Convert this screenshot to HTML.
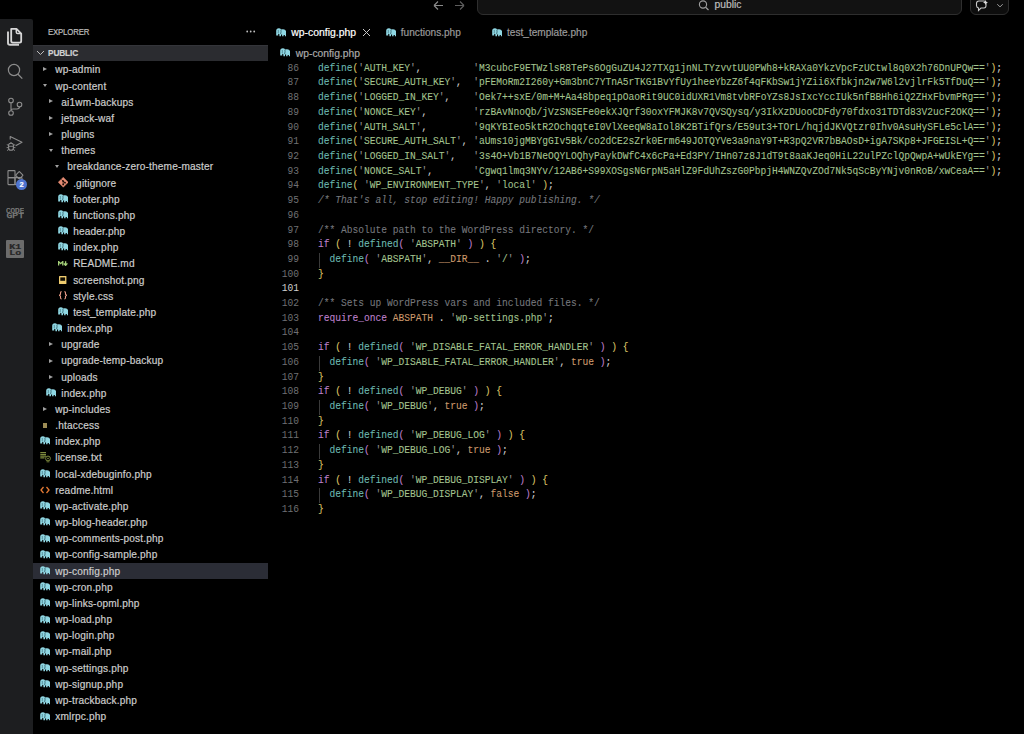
<!DOCTYPE html>
<html><head><meta charset="utf-8"><title>wp-config.php</title><style>
*{margin:0;padding:0;box-sizing:border-box}
html,body{width:1024px;height:734px;overflow:hidden;background:#000}
body{position:relative;font-family:"Liberation Sans",sans-serif;color:#ccc;-webkit-text-stroke:0.2px currentColor}
.st{-webkit-text-stroke:0.25px currentColor}
.a{position:absolute}
.row{position:absolute;left:33px;width:234.5px;height:16.19px;white-space:nowrap;font-size:10.1px;color:#cccccc}
.row span.t{position:absolute;top:0;line-height:16.19px}
.tw{position:absolute;width:0;height:0}
.tw.r{border-left:4px solid #a0a0a0;border-top:2.8px solid transparent;border-bottom:2.8px solid transparent}
.tw.d{border-top:3.8px solid #a0a0a0;border-left:2.8px solid transparent;border-right:2.8px solid transparent}
.ic{position:absolute}
.code{-webkit-text-stroke:0.08px currentColor;position:absolute;left:318.0px;transform-origin:0 9.1px;transform:scaleY(1.17);font-family:"Liberation Mono",monospace;font-size:9.591666666666667px;white-space:pre;line-height:14.71px;height:14.71px}
.ln{-webkit-text-stroke:0;position:absolute;left:269.5px;transform-origin:0 9.1px;transform:scaleY(1.17);width:29.5px;text-align:right;font-family:"Liberation Mono",monospace;font-size:9.591666666666667px;line-height:14.71px;color:#6f7073}
.f{color:#6cb8b0} .s{color:#a3c38f} .q{color:#8f8f8f} .p{color:#cfcfcf} .b1{color:#dcc466} .b2{color:#bf7ecb} .k{color:#bf82cc} .c{color:#cc9a6c} .cm{color:#75777c;font-style:italic} .dc{color:#75777c}
</style></head>
<body>
<div class="a" style="left:0;top:0;width:1024px;height:19.5px;background:#000"></div><svg class="a" style="left:432px;top:0px" width="40" height="12" viewBox="0 0 40 12">
<path d="M2 5.5 H11 M2 5.5 L6 1.5 M2 5.5 L6 9.5" stroke="#8a8a8a" stroke-width="1.1" fill="none"/>
<path d="M23 5.5 H32 M32 5.5 L28 1.5 M32 5.5 L28 9.5" stroke="#5e5e5e" stroke-width="1.1" fill="none"/>
</svg><div class="a" style="left:477px;top:-10px;width:485px;height:24.5px;background:#121212;border:1px solid #2e2e2e;border-radius:6px"></div><svg class="a" style="left:698px;top:0px" width="12" height="11" viewBox="0 0 12 11"><circle cx="5" cy="4.5" r="3.6" stroke="#a0a0a0" stroke-width="1.1" fill="none"/><path d="M7.6 7.2 L10.5 10" stroke="#a0a0a0" stroke-width="1.2"/></svg><div class="a" style="left:714.5px;top:-0.6px;font-size:10.3px;line-height:12px;color:#bdbdbd">public</div><div class="a" style="left:970px;top:-10px;width:39px;height:24.5px;background:#0d0d0d;border:1px solid #2e2e2e;border-radius:6px"></div><svg class="a" style="left:975px;top:0px" width="32" height="12" viewBox="0 0 32 12">
<path d="M4 1 H9 Q11 1 11 3.5 V5.5 Q11 8 9 8 H6 L3.5 10.5 V8 Q1.5 7.5 1.5 5.5 V3.5 Q1.5 1 4 1 Z" stroke="#c8c8c8" stroke-width="1.1" fill="none"/>
<path d="M10.5 0 L11.3 1.7 L13 2.5 L11.3 3.3 L10.5 5 L9.7 3.3 L8 2.5 L9.7 1.7 Z" fill="#d8d8d8"/>
<path d="M22.3 4.2 L25 6.9 L27.7 4.2" stroke="#a0a0a0" stroke-width="1" fill="none"/>
</svg><div class="a" style="left:0;top:18.8px;width:33px;height:716px;background:#1d1e20;border-top-right-radius:2px"></div><svg class="a" style="left:6px;top:27px" width="17" height="20" viewBox="0 0 17 20">
<path d="M2 4.4 V16 Q2 17.8 4 17.8 H13" stroke="#d0d0d0" stroke-width="1.9" fill="none"/>
<path d="M5.2 1.9 H10.5 L15.2 6.6 V14 Q15.2 15.6 13.6 15.6 H6.8 Q5.2 15.6 5.2 14 Z" stroke="#d8d8d8" stroke-width="1.8" fill="none" stroke-linejoin="round"/>
<path d="M10.3 1.9 V5.2 Q10.3 6.6 11.7 6.6 H15.2" stroke="#d8d8d8" stroke-width="1.5" fill="none"/>
</svg><svg class="a" style="left:6px;top:62px" width="18" height="19" viewBox="0 0 18 19">
<circle cx="8" cy="8" r="5.6" stroke="#8c8c8c" stroke-width="1.2" fill="none"/>
<path d="M12 12.2 L16.3 16.6" stroke="#8c8c8c" stroke-width="1.3"/>
</svg><svg class="a" style="left:7px;top:97px" width="16" height="20" viewBox="0 0 16 20">
<circle cx="4" cy="3.5" r="2.3" stroke="#8c8c8c" stroke-width="1.1" fill="none"/>
<circle cx="4" cy="16" r="2.3" stroke="#8c8c8c" stroke-width="1.1" fill="none"/>
<circle cx="12.5" cy="7.5" r="2.3" stroke="#8c8c8c" stroke-width="1.1" fill="none"/>
<path d="M4 5.8 V13.7 M12.5 9.8 Q12.5 12 10 12 H6 Q4 12 4 13.7" stroke="#8c8c8c" stroke-width="1.1" fill="none"/>
</svg><svg class="a" style="left:0px;top:125px" width="33" height="30" viewBox="0 0 33 30">
<path d="M10.2 14.5 V11.5 L22 17.2 L15.6 20.8" stroke="#8c8c8c" stroke-width="1.1" fill="none" stroke-linejoin="round"/>
<path d="M8.6 20.2 Q8.6 18.2 11 18.2 Q13.4 18.2 13.4 20.2 V23 Q13.4 25.3 11 25.3 Q8.6 25.3 8.6 23 Z" stroke="#8c8c8c" stroke-width="1.1" fill="none"/>
<path d="M9.6 18.6 Q11 16.6 12.4 18.6 M8.6 21.3 H13.4 M6.8 19.6 L8.6 20.4 M15.2 19.6 L13.4 20.4 M6.6 22.6 H8.6 M13.4 22.6 H15.4 M7 25.6 L8.9 24.3 M15 25.6 L13.1 24.3" stroke="#8c8c8c" stroke-width="0.9" fill="none"/>
</svg><svg class="a" style="left:0px;top:165px" width="33" height="24" viewBox="0 0 33 24">
<rect x="8" y="5.6" width="7" height="7" stroke="#8c8c8c" stroke-width="1.1" fill="none" rx="0.6"/>
<rect x="8" y="12.6" width="7" height="7" stroke="#8c8c8c" stroke-width="1.1" fill="none" rx="0.6"/>
<rect x="15" y="12.6" width="7" height="7" stroke="#8c8c8c" stroke-width="1.1" fill="none" rx="0.6"/>
<rect x="16.6" y="7.6" width="5.4" height="5.4" stroke="#8c8c8c" stroke-width="1.1" fill="none" rx="0.6" transform="rotate(45 19.3 10.3)"/>
</svg><div class="a" style="left:16px;top:178.7px;width:11px;height:11px;border-radius:50%;background:#4f74cf;color:#fff;font-size:7.5px;font-weight:bold;line-height:11px;text-align:center">2</div><svg class="a" style="left:5.8px;top:208.3px" width="18.5" height="11" viewBox="0 0 18.5 11">
<text x="0" y="4.7" textLength="18.2" lengthAdjust="spacingAndGlyphs" font-family="Liberation Mono" font-size="6.4" fill="#7e7e7e" stroke="#7e7e7e" stroke-width="0.25">CODE</text>
<text x="0.5" y="10.3" textLength="17.5" lengthAdjust="spacingAndGlyphs" font-family="Liberation Mono" font-size="6.4" fill="#7e7e7e" stroke="#7e7e7e" stroke-width="0.25">GPT</text>
</svg><div class="a" style="left:6px;top:240px;width:18.4px;height:18.4px;background:#6c6c6c;border-radius:1px"></div><svg class="a" style="left:6px;top:240px" width="18.4" height="18.4" viewBox="0 0 18.4 18.4">
<text x="3.3" y="8.6" textLength="12" lengthAdjust="spacingAndGlyphs" font-family="Liberation Mono" font-weight="bold" font-size="7.6" fill="#262626" stroke="#262626" stroke-width="0.2">K1</text>
<text x="3.3" y="15.4" textLength="12" lengthAdjust="spacingAndGlyphs" font-family="Liberation Mono" font-weight="bold" font-size="7.6" fill="#262626" stroke="#262626" stroke-width="0.2">Lo</text>
</svg><div class="a" style="left:48px;top:26.6px;font-size:8.6px;line-height:10px;color:#bdbdbd;letter-spacing:-0.2px;transform:scaleX(0.91);transform-origin:0 0">EXPLORER</div><svg class="a" style="left:246px;top:30px" width="10" height="3" viewBox="0 0 10 3"><circle cx="1.2" cy="1.5" r="0.9" fill="#c0c0c0"/><circle cx="4.7" cy="1.5" r="0.9" fill="#c0c0c0"/><circle cx="8.2" cy="1.5" r="0.9" fill="#c0c0c0"/></svg><div class="a" style="left:33px;top:45.0px;width:234.5px;height:16.19px;background:#2b2c30;border-top:1px solid #34353a"></div><svg class="a" style="left:36px;top:50.0px" width="9" height="6" viewBox="0 0 9 6"><path d="M1 1 L4.5 4.5 L8 1" stroke="#bdbdbd" stroke-width="1" fill="none"/></svg><div class="a" style="left:48px;top:45.0px;font-size:8.3px;line-height:16.19px;color:#d0d0d0;font-weight:bold;letter-spacing:-0.15px">PUBLIC</div><div class="a" style="left:55.30px;top:62.37px;font-size:10.1px;line-height:16.19px;white-space:nowrap;color:#cccccc;letter-spacing:0.17px">wp-admin</div><div class="a tw r" style="left:43.40px;top:67.09px"></div><div class="a" style="left:55.30px;top:78.54px;font-size:10.1px;line-height:16.19px;white-space:nowrap;color:#cccccc;letter-spacing:0.17px">wp-content</div><div class="a tw d" style="left:43.10px;top:83.78px"></div><div class="a" style="left:61.25px;top:94.71px;font-size:10.1px;line-height:16.19px;white-space:nowrap;color:#cccccc;letter-spacing:0.17px">ai1wm-backups</div><div class="a tw r" style="left:49.35px;top:99.47px"></div><div class="a" style="left:61.25px;top:110.88px;font-size:10.1px;line-height:16.19px;white-space:nowrap;color:#cccccc;letter-spacing:0.17px">jetpack-waf</div><div class="a tw r" style="left:49.35px;top:115.66px"></div><div class="a" style="left:61.25px;top:127.05px;font-size:10.1px;line-height:16.19px;white-space:nowrap;color:#cccccc;letter-spacing:0.17px">plugins</div><div class="a tw r" style="left:49.35px;top:131.85px"></div><div class="a" style="left:61.25px;top:143.22px;font-size:10.1px;line-height:16.19px;white-space:nowrap;color:#cccccc;letter-spacing:0.17px">themes</div><div class="a tw d" style="left:49.05px;top:148.54px"></div><div class="a" style="left:67.20px;top:159.39px;font-size:10.1px;line-height:16.19px;white-space:nowrap;color:#cccccc;letter-spacing:0.17px">breakdance-zero-theme-master</div><div class="a tw d" style="left:55.00px;top:164.73px"></div><div class="a" style="left:73.15px;top:175.56px;font-size:10.1px;line-height:16.19px;white-space:nowrap;color:#cccccc;letter-spacing:0.17px">.gitignore</div><svg class="ic" style="left:57.75px;top:177.12px" width="10.5" height="10.5" viewBox="0 0 10.5 10.5"><path d="M5.25 0.2 L10.3 5.25 L5.25 10.3 L0.2 5.25 Z" fill="#e48a72" stroke="#e48a72" stroke-width="0.4" stroke-linejoin="round"/><path d="M3.6 2.6 L5.2 4.2 M5.2 4.2 V7.6 M5.2 4.2 L6.9 5.6" stroke="#1a0a05" stroke-width="0.8"/><circle cx="5.2" cy="4.2" r="0.9" fill="#1a0a05"/><circle cx="5.2" cy="7.4" r="0.9" fill="#1a0a05"/><circle cx="7" cy="5.7" r="0.9" fill="#1a0a05"/></svg><div class="a" style="left:73.15px;top:191.73px;font-size:10.1px;line-height:16.19px;white-space:nowrap;color:#cccccc;letter-spacing:0.17px">footer.php</div><svg class="ic" style="left:57.75px;top:193.61px" width="10.5" height="9" viewBox="0 0 10.5 9"><path d="M0.2 2.8 Q0.2 0.2 2.8 0.2 Q4.6 0.2 5 1.4 Q5.6 1.1 7.2 1.2 Q10.3 1.5 10.3 4.8 V8.2 H8.9 V6.9 H7.6 V8.2 H6.1 V6.6 H5 V8.2 H3.4 V6.2 Q2.4 6 2.2 5.2 V7.6 H0.2 Z" fill="#8fd6e2"/><path d="M4.9 2 Q5.4 3.5 4.6 6" stroke="#1f4650" stroke-width="0.7" fill="none"/><path d="M2.2 2 Q2.5 3.4 2.2 5" stroke="#1f4650" stroke-width="0.5" fill="none"/></svg><div class="a" style="left:73.15px;top:207.90px;font-size:10.1px;line-height:16.19px;white-space:nowrap;color:#cccccc;letter-spacing:0.17px">functions.php</div><svg class="ic" style="left:57.75px;top:209.80px" width="10.5" height="9" viewBox="0 0 10.5 9"><path d="M0.2 2.8 Q0.2 0.2 2.8 0.2 Q4.6 0.2 5 1.4 Q5.6 1.1 7.2 1.2 Q10.3 1.5 10.3 4.8 V8.2 H8.9 V6.9 H7.6 V8.2 H6.1 V6.6 H5 V8.2 H3.4 V6.2 Q2.4 6 2.2 5.2 V7.6 H0.2 Z" fill="#8fd6e2"/><path d="M4.9 2 Q5.4 3.5 4.6 6" stroke="#1f4650" stroke-width="0.7" fill="none"/><path d="M2.2 2 Q2.5 3.4 2.2 5" stroke="#1f4650" stroke-width="0.5" fill="none"/></svg><div class="a" style="left:73.15px;top:224.07px;font-size:10.1px;line-height:16.19px;white-space:nowrap;color:#cccccc;letter-spacing:0.17px">header.php</div><svg class="ic" style="left:57.75px;top:225.99px" width="10.5" height="9" viewBox="0 0 10.5 9"><path d="M0.2 2.8 Q0.2 0.2 2.8 0.2 Q4.6 0.2 5 1.4 Q5.6 1.1 7.2 1.2 Q10.3 1.5 10.3 4.8 V8.2 H8.9 V6.9 H7.6 V8.2 H6.1 V6.6 H5 V8.2 H3.4 V6.2 Q2.4 6 2.2 5.2 V7.6 H0.2 Z" fill="#8fd6e2"/><path d="M4.9 2 Q5.4 3.5 4.6 6" stroke="#1f4650" stroke-width="0.7" fill="none"/><path d="M2.2 2 Q2.5 3.4 2.2 5" stroke="#1f4650" stroke-width="0.5" fill="none"/></svg><div class="a" style="left:73.15px;top:240.24px;font-size:10.1px;line-height:16.19px;white-space:nowrap;color:#cccccc;letter-spacing:0.17px">index.php</div><svg class="ic" style="left:57.75px;top:242.18px" width="10.5" height="9" viewBox="0 0 10.5 9"><path d="M0.2 2.8 Q0.2 0.2 2.8 0.2 Q4.6 0.2 5 1.4 Q5.6 1.1 7.2 1.2 Q10.3 1.5 10.3 4.8 V8.2 H8.9 V6.9 H7.6 V8.2 H6.1 V6.6 H5 V8.2 H3.4 V6.2 Q2.4 6 2.2 5.2 V7.6 H0.2 Z" fill="#8fd6e2"/><path d="M4.9 2 Q5.4 3.5 4.6 6" stroke="#1f4650" stroke-width="0.7" fill="none"/><path d="M2.2 2 Q2.5 3.4 2.2 5" stroke="#1f4650" stroke-width="0.5" fill="none"/></svg><div class="a" style="left:73.15px;top:256.41px;font-size:10.1px;line-height:16.19px;white-space:nowrap;color:#cccccc;letter-spacing:0.17px">README.md</div><svg class="ic" style="left:58.15px;top:261.07px" width="10" height="5" viewBox="0 0 10 5"><path d="M0.6 4.6 V0.6 L2.7 2.6 L4.8 0.6 V4.6" stroke="#a6d27a" stroke-width="1.3" fill="none"/><path d="M7.6 0.2 V4 M5.8 2.4 L7.6 4.4 L9.4 2.4" stroke="#a6d27a" stroke-width="1.3" fill="none"/></svg><div class="a" style="left:73.15px;top:272.58px;font-size:10.1px;line-height:16.19px;white-space:nowrap;color:#cccccc;letter-spacing:0.17px">screenshot.png</div><svg class="ic" style="left:59.05px;top:276.06px" width="8" height="8" viewBox="0 0 8 8"><rect x="0" y="0" width="7.4" height="8" fill="#eecb6e" rx="0.6"/><rect x="1.3" y="1.4" width="4.8" height="3.4" fill="#120e04"/></svg><div class="a" style="left:73.15px;top:288.75px;font-size:10.1px;line-height:16.19px;white-space:nowrap;color:#cccccc;letter-spacing:0.17px">style.css</div><svg class="ic" style="left:58.75px;top:291.15px" width="8" height="8.5" viewBox="0 0 8 8.5"><path d="M2.6 0.6 Q1.5 0.6 1.5 1.7 V3.3 L0.4 4.25 L1.5 5.2 V6.8 Q1.5 7.9 2.6 7.9 M5.4 0.6 Q6.5 0.6 6.5 1.7 V3.3 L7.6 4.25 L6.5 5.2 V6.8 Q6.5 7.9 5.4 7.9" stroke="#e89a86" stroke-width="1.1" fill="none" stroke-linejoin="miter"/></svg><div class="a" style="left:73.15px;top:304.92px;font-size:10.1px;line-height:16.19px;white-space:nowrap;color:#cccccc;letter-spacing:0.17px">test_template.php</div><svg class="ic" style="left:57.75px;top:306.94px" width="10.5" height="9" viewBox="0 0 10.5 9"><path d="M0.2 2.8 Q0.2 0.2 2.8 0.2 Q4.6 0.2 5 1.4 Q5.6 1.1 7.2 1.2 Q10.3 1.5 10.3 4.8 V8.2 H8.9 V6.9 H7.6 V8.2 H6.1 V6.6 H5 V8.2 H3.4 V6.2 Q2.4 6 2.2 5.2 V7.6 H0.2 Z" fill="#8fd6e2"/><path d="M4.9 2 Q5.4 3.5 4.6 6" stroke="#1f4650" stroke-width="0.7" fill="none"/><path d="M2.2 2 Q2.5 3.4 2.2 5" stroke="#1f4650" stroke-width="0.5" fill="none"/></svg><div class="a" style="left:67.20px;top:321.09px;font-size:10.1px;line-height:16.19px;white-space:nowrap;color:#cccccc;letter-spacing:0.17px">index.php</div><svg class="ic" style="left:51.80px;top:323.13px" width="10.5" height="9" viewBox="0 0 10.5 9"><path d="M0.2 2.8 Q0.2 0.2 2.8 0.2 Q4.6 0.2 5 1.4 Q5.6 1.1 7.2 1.2 Q10.3 1.5 10.3 4.8 V8.2 H8.9 V6.9 H7.6 V8.2 H6.1 V6.6 H5 V8.2 H3.4 V6.2 Q2.4 6 2.2 5.2 V7.6 H0.2 Z" fill="#8fd6e2"/><path d="M4.9 2 Q5.4 3.5 4.6 6" stroke="#1f4650" stroke-width="0.7" fill="none"/><path d="M2.2 2 Q2.5 3.4 2.2 5" stroke="#1f4650" stroke-width="0.5" fill="none"/></svg><div class="a" style="left:61.25px;top:337.26px;font-size:10.1px;line-height:16.19px;white-space:nowrap;color:#cccccc;letter-spacing:0.17px">upgrade</div><div class="a tw r" style="left:49.35px;top:342.32px"></div><div class="a" style="left:61.25px;top:353.43px;font-size:10.1px;line-height:16.19px;white-space:nowrap;color:#cccccc;letter-spacing:0.17px">upgrade-temp-backup</div><div class="a tw r" style="left:49.35px;top:358.51px"></div><div class="a" style="left:61.25px;top:369.60px;font-size:10.1px;line-height:16.19px;white-space:nowrap;color:#cccccc;letter-spacing:0.17px">uploads</div><div class="a tw r" style="left:49.35px;top:374.70px"></div><div class="a" style="left:61.25px;top:385.77px;font-size:10.1px;line-height:16.19px;white-space:nowrap;color:#cccccc;letter-spacing:0.17px">index.php</div><svg class="ic" style="left:45.85px;top:387.89px" width="10.5" height="9" viewBox="0 0 10.5 9"><path d="M0.2 2.8 Q0.2 0.2 2.8 0.2 Q4.6 0.2 5 1.4 Q5.6 1.1 7.2 1.2 Q10.3 1.5 10.3 4.8 V8.2 H8.9 V6.9 H7.6 V8.2 H6.1 V6.6 H5 V8.2 H3.4 V6.2 Q2.4 6 2.2 5.2 V7.6 H0.2 Z" fill="#8fd6e2"/><path d="M4.9 2 Q5.4 3.5 4.6 6" stroke="#1f4650" stroke-width="0.7" fill="none"/><path d="M2.2 2 Q2.5 3.4 2.2 5" stroke="#1f4650" stroke-width="0.5" fill="none"/></svg><div class="a" style="left:55.30px;top:401.94px;font-size:10.1px;line-height:16.19px;white-space:nowrap;color:#cccccc;letter-spacing:0.17px">wp-includes</div><div class="a tw r" style="left:43.40px;top:407.08px"></div><div class="a" style="left:55.30px;top:418.11px;font-size:10.1px;line-height:16.19px;white-space:nowrap;color:#cccccc;letter-spacing:0.17px">.htaccess</div><div class="a" style="left:42.80px;top:422.77px;width:4px;height:5px;background:#9d8c55"></div><div class="a" style="left:55.30px;top:434.28px;font-size:10.1px;line-height:16.19px;white-space:nowrap;color:#cccccc;letter-spacing:0.17px">index.php</div><svg class="ic" style="left:39.90px;top:436.46px" width="10.5" height="9" viewBox="0 0 10.5 9"><path d="M0.2 2.8 Q0.2 0.2 2.8 0.2 Q4.6 0.2 5 1.4 Q5.6 1.1 7.2 1.2 Q10.3 1.5 10.3 4.8 V8.2 H8.9 V6.9 H7.6 V8.2 H6.1 V6.6 H5 V8.2 H3.4 V6.2 Q2.4 6 2.2 5.2 V7.6 H0.2 Z" fill="#8fd6e2"/><path d="M4.9 2 Q5.4 3.5 4.6 6" stroke="#1f4650" stroke-width="0.7" fill="none"/><path d="M2.2 2 Q2.5 3.4 2.2 5" stroke="#1f4650" stroke-width="0.5" fill="none"/></svg><div class="a" style="left:55.30px;top:450.45px;font-size:10.1px;line-height:16.19px;white-space:nowrap;color:#cccccc;letter-spacing:0.17px">license.txt</div><svg class="ic" style="left:39.90px;top:451.15px" width="11" height="12" viewBox="0 0 11 12"><path d="M0.3 1.5 H6 M0.3 3.3 H6 M0.3 5.1 H6 M0.3 6.9 H4.5" stroke="#7d8a3e" stroke-width="1.2"/><circle cx="8" cy="7.5" r="2.4" stroke="#7d8a3e" stroke-width="1" fill="none"/><circle cx="8" cy="7.5" r="0.8" fill="#7d8a3e"/><path d="M7.2 9.8 V11.5 M8.8 9.8 V11.5" stroke="#7d8a3e" stroke-width="0.8"/></svg><div class="a" style="left:55.30px;top:466.62px;font-size:10.1px;line-height:16.19px;white-space:nowrap;color:#cccccc;letter-spacing:0.17px">local-xdebuginfo.php</div><svg class="ic" style="left:39.90px;top:468.84px" width="10.5" height="9" viewBox="0 0 10.5 9"><path d="M0.2 2.8 Q0.2 0.2 2.8 0.2 Q4.6 0.2 5 1.4 Q5.6 1.1 7.2 1.2 Q10.3 1.5 10.3 4.8 V8.2 H8.9 V6.9 H7.6 V8.2 H6.1 V6.6 H5 V8.2 H3.4 V6.2 Q2.4 6 2.2 5.2 V7.6 H0.2 Z" fill="#8fd6e2"/><path d="M4.9 2 Q5.4 3.5 4.6 6" stroke="#1f4650" stroke-width="0.7" fill="none"/><path d="M2.2 2 Q2.5 3.4 2.2 5" stroke="#1f4650" stroke-width="0.5" fill="none"/></svg><div class="a" style="left:55.30px;top:482.79px;font-size:10.1px;line-height:16.19px;white-space:nowrap;color:#cccccc;letter-spacing:0.17px">readme.html</div><svg class="ic" style="left:40.40px;top:485.53px" width="10" height="8" viewBox="0 0 10 8"><path d="M3.5 1 L1 4 L3.5 7 M6.5 1 L9 4 L6.5 7" stroke="#e37933" stroke-width="1.3" fill="none"/></svg><div class="a" style="left:55.30px;top:498.96px;font-size:10.1px;line-height:16.19px;white-space:nowrap;color:#cccccc;letter-spacing:0.17px">wp-activate.php</div><svg class="ic" style="left:39.90px;top:501.22px" width="10.5" height="9" viewBox="0 0 10.5 9"><path d="M0.2 2.8 Q0.2 0.2 2.8 0.2 Q4.6 0.2 5 1.4 Q5.6 1.1 7.2 1.2 Q10.3 1.5 10.3 4.8 V8.2 H8.9 V6.9 H7.6 V8.2 H6.1 V6.6 H5 V8.2 H3.4 V6.2 Q2.4 6 2.2 5.2 V7.6 H0.2 Z" fill="#8fd6e2"/><path d="M4.9 2 Q5.4 3.5 4.6 6" stroke="#1f4650" stroke-width="0.7" fill="none"/><path d="M2.2 2 Q2.5 3.4 2.2 5" stroke="#1f4650" stroke-width="0.5" fill="none"/></svg><div class="a" style="left:55.30px;top:515.13px;font-size:10.1px;line-height:16.19px;white-space:nowrap;color:#cccccc;letter-spacing:0.17px">wp-blog-header.php</div><svg class="ic" style="left:39.90px;top:517.41px" width="10.5" height="9" viewBox="0 0 10.5 9"><path d="M0.2 2.8 Q0.2 0.2 2.8 0.2 Q4.6 0.2 5 1.4 Q5.6 1.1 7.2 1.2 Q10.3 1.5 10.3 4.8 V8.2 H8.9 V6.9 H7.6 V8.2 H6.1 V6.6 H5 V8.2 H3.4 V6.2 Q2.4 6 2.2 5.2 V7.6 H0.2 Z" fill="#8fd6e2"/><path d="M4.9 2 Q5.4 3.5 4.6 6" stroke="#1f4650" stroke-width="0.7" fill="none"/><path d="M2.2 2 Q2.5 3.4 2.2 5" stroke="#1f4650" stroke-width="0.5" fill="none"/></svg><div class="a" style="left:55.30px;top:531.30px;font-size:10.1px;line-height:16.19px;white-space:nowrap;color:#cccccc;letter-spacing:0.17px">wp-comments-post.php</div><svg class="ic" style="left:39.90px;top:533.60px" width="10.5" height="9" viewBox="0 0 10.5 9"><path d="M0.2 2.8 Q0.2 0.2 2.8 0.2 Q4.6 0.2 5 1.4 Q5.6 1.1 7.2 1.2 Q10.3 1.5 10.3 4.8 V8.2 H8.9 V6.9 H7.6 V8.2 H6.1 V6.6 H5 V8.2 H3.4 V6.2 Q2.4 6 2.2 5.2 V7.6 H0.2 Z" fill="#8fd6e2"/><path d="M4.9 2 Q5.4 3.5 4.6 6" stroke="#1f4650" stroke-width="0.7" fill="none"/><path d="M2.2 2 Q2.5 3.4 2.2 5" stroke="#1f4650" stroke-width="0.5" fill="none"/></svg><div class="a" style="left:55.30px;top:547.47px;font-size:10.1px;line-height:16.19px;white-space:nowrap;color:#cccccc;letter-spacing:0.17px">wp-config-sample.php</div><svg class="ic" style="left:39.90px;top:549.79px" width="10.5" height="9" viewBox="0 0 10.5 9"><path d="M0.2 2.8 Q0.2 0.2 2.8 0.2 Q4.6 0.2 5 1.4 Q5.6 1.1 7.2 1.2 Q10.3 1.5 10.3 4.8 V8.2 H8.9 V6.9 H7.6 V8.2 H6.1 V6.6 H5 V8.2 H3.4 V6.2 Q2.4 6 2.2 5.2 V7.6 H0.2 Z" fill="#8fd6e2"/><path d="M4.9 2 Q5.4 3.5 4.6 6" stroke="#1f4650" stroke-width="0.7" fill="none"/><path d="M2.2 2 Q2.5 3.4 2.2 5" stroke="#1f4650" stroke-width="0.5" fill="none"/></svg><div class="a" style="left:33px;top:563.08px;width:234.5px;height:16.19px;background:#2b2d36"></div><div class="a" style="left:55.30px;top:563.64px;font-size:10.1px;line-height:16.19px;white-space:nowrap;color:#cccccc;letter-spacing:0.17px">wp-config.php</div><svg class="ic" style="left:39.90px;top:565.98px" width="10.5" height="9" viewBox="0 0 10.5 9"><path d="M0.2 2.8 Q0.2 0.2 2.8 0.2 Q4.6 0.2 5 1.4 Q5.6 1.1 7.2 1.2 Q10.3 1.5 10.3 4.8 V8.2 H8.9 V6.9 H7.6 V8.2 H6.1 V6.6 H5 V8.2 H3.4 V6.2 Q2.4 6 2.2 5.2 V7.6 H0.2 Z" fill="#8fd6e2"/><path d="M4.9 2 Q5.4 3.5 4.6 6" stroke="#1f4650" stroke-width="0.7" fill="none"/><path d="M2.2 2 Q2.5 3.4 2.2 5" stroke="#1f4650" stroke-width="0.5" fill="none"/></svg><div class="a" style="left:55.30px;top:579.81px;font-size:10.1px;line-height:16.19px;white-space:nowrap;color:#cccccc;letter-spacing:0.17px">wp-cron.php</div><svg class="ic" style="left:39.90px;top:582.17px" width="10.5" height="9" viewBox="0 0 10.5 9"><path d="M0.2 2.8 Q0.2 0.2 2.8 0.2 Q4.6 0.2 5 1.4 Q5.6 1.1 7.2 1.2 Q10.3 1.5 10.3 4.8 V8.2 H8.9 V6.9 H7.6 V8.2 H6.1 V6.6 H5 V8.2 H3.4 V6.2 Q2.4 6 2.2 5.2 V7.6 H0.2 Z" fill="#8fd6e2"/><path d="M4.9 2 Q5.4 3.5 4.6 6" stroke="#1f4650" stroke-width="0.7" fill="none"/><path d="M2.2 2 Q2.5 3.4 2.2 5" stroke="#1f4650" stroke-width="0.5" fill="none"/></svg><div class="a" style="left:55.30px;top:595.98px;font-size:10.1px;line-height:16.19px;white-space:nowrap;color:#cccccc;letter-spacing:0.17px">wp-links-opml.php</div><svg class="ic" style="left:39.90px;top:598.36px" width="10.5" height="9" viewBox="0 0 10.5 9"><path d="M0.2 2.8 Q0.2 0.2 2.8 0.2 Q4.6 0.2 5 1.4 Q5.6 1.1 7.2 1.2 Q10.3 1.5 10.3 4.8 V8.2 H8.9 V6.9 H7.6 V8.2 H6.1 V6.6 H5 V8.2 H3.4 V6.2 Q2.4 6 2.2 5.2 V7.6 H0.2 Z" fill="#8fd6e2"/><path d="M4.9 2 Q5.4 3.5 4.6 6" stroke="#1f4650" stroke-width="0.7" fill="none"/><path d="M2.2 2 Q2.5 3.4 2.2 5" stroke="#1f4650" stroke-width="0.5" fill="none"/></svg><div class="a" style="left:55.30px;top:612.15px;font-size:10.1px;line-height:16.19px;white-space:nowrap;color:#cccccc;letter-spacing:0.17px">wp-load.php</div><svg class="ic" style="left:39.90px;top:614.55px" width="10.5" height="9" viewBox="0 0 10.5 9"><path d="M0.2 2.8 Q0.2 0.2 2.8 0.2 Q4.6 0.2 5 1.4 Q5.6 1.1 7.2 1.2 Q10.3 1.5 10.3 4.8 V8.2 H8.9 V6.9 H7.6 V8.2 H6.1 V6.6 H5 V8.2 H3.4 V6.2 Q2.4 6 2.2 5.2 V7.6 H0.2 Z" fill="#8fd6e2"/><path d="M4.9 2 Q5.4 3.5 4.6 6" stroke="#1f4650" stroke-width="0.7" fill="none"/><path d="M2.2 2 Q2.5 3.4 2.2 5" stroke="#1f4650" stroke-width="0.5" fill="none"/></svg><div class="a" style="left:55.30px;top:628.32px;font-size:10.1px;line-height:16.19px;white-space:nowrap;color:#cccccc;letter-spacing:0.17px">wp-login.php</div><svg class="ic" style="left:39.90px;top:630.74px" width="10.5" height="9" viewBox="0 0 10.5 9"><path d="M0.2 2.8 Q0.2 0.2 2.8 0.2 Q4.6 0.2 5 1.4 Q5.6 1.1 7.2 1.2 Q10.3 1.5 10.3 4.8 V8.2 H8.9 V6.9 H7.6 V8.2 H6.1 V6.6 H5 V8.2 H3.4 V6.2 Q2.4 6 2.2 5.2 V7.6 H0.2 Z" fill="#8fd6e2"/><path d="M4.9 2 Q5.4 3.5 4.6 6" stroke="#1f4650" stroke-width="0.7" fill="none"/><path d="M2.2 2 Q2.5 3.4 2.2 5" stroke="#1f4650" stroke-width="0.5" fill="none"/></svg><div class="a" style="left:55.30px;top:644.49px;font-size:10.1px;line-height:16.19px;white-space:nowrap;color:#cccccc;letter-spacing:0.17px">wp-mail.php</div><svg class="ic" style="left:39.90px;top:646.93px" width="10.5" height="9" viewBox="0 0 10.5 9"><path d="M0.2 2.8 Q0.2 0.2 2.8 0.2 Q4.6 0.2 5 1.4 Q5.6 1.1 7.2 1.2 Q10.3 1.5 10.3 4.8 V8.2 H8.9 V6.9 H7.6 V8.2 H6.1 V6.6 H5 V8.2 H3.4 V6.2 Q2.4 6 2.2 5.2 V7.6 H0.2 Z" fill="#8fd6e2"/><path d="M4.9 2 Q5.4 3.5 4.6 6" stroke="#1f4650" stroke-width="0.7" fill="none"/><path d="M2.2 2 Q2.5 3.4 2.2 5" stroke="#1f4650" stroke-width="0.5" fill="none"/></svg><div class="a" style="left:55.30px;top:660.66px;font-size:10.1px;line-height:16.19px;white-space:nowrap;color:#cccccc;letter-spacing:0.17px">wp-settings.php</div><svg class="ic" style="left:39.90px;top:663.12px" width="10.5" height="9" viewBox="0 0 10.5 9"><path d="M0.2 2.8 Q0.2 0.2 2.8 0.2 Q4.6 0.2 5 1.4 Q5.6 1.1 7.2 1.2 Q10.3 1.5 10.3 4.8 V8.2 H8.9 V6.9 H7.6 V8.2 H6.1 V6.6 H5 V8.2 H3.4 V6.2 Q2.4 6 2.2 5.2 V7.6 H0.2 Z" fill="#8fd6e2"/><path d="M4.9 2 Q5.4 3.5 4.6 6" stroke="#1f4650" stroke-width="0.7" fill="none"/><path d="M2.2 2 Q2.5 3.4 2.2 5" stroke="#1f4650" stroke-width="0.5" fill="none"/></svg><div class="a" style="left:55.30px;top:676.83px;font-size:10.1px;line-height:16.19px;white-space:nowrap;color:#cccccc;letter-spacing:0.17px">wp-signup.php</div><svg class="ic" style="left:39.90px;top:679.31px" width="10.5" height="9" viewBox="0 0 10.5 9"><path d="M0.2 2.8 Q0.2 0.2 2.8 0.2 Q4.6 0.2 5 1.4 Q5.6 1.1 7.2 1.2 Q10.3 1.5 10.3 4.8 V8.2 H8.9 V6.9 H7.6 V8.2 H6.1 V6.6 H5 V8.2 H3.4 V6.2 Q2.4 6 2.2 5.2 V7.6 H0.2 Z" fill="#8fd6e2"/><path d="M4.9 2 Q5.4 3.5 4.6 6" stroke="#1f4650" stroke-width="0.7" fill="none"/><path d="M2.2 2 Q2.5 3.4 2.2 5" stroke="#1f4650" stroke-width="0.5" fill="none"/></svg><div class="a" style="left:55.30px;top:693.00px;font-size:10.1px;line-height:16.19px;white-space:nowrap;color:#cccccc;letter-spacing:0.17px">wp-trackback.php</div><svg class="ic" style="left:39.90px;top:695.50px" width="10.5" height="9" viewBox="0 0 10.5 9"><path d="M0.2 2.8 Q0.2 0.2 2.8 0.2 Q4.6 0.2 5 1.4 Q5.6 1.1 7.2 1.2 Q10.3 1.5 10.3 4.8 V8.2 H8.9 V6.9 H7.6 V8.2 H6.1 V6.6 H5 V8.2 H3.4 V6.2 Q2.4 6 2.2 5.2 V7.6 H0.2 Z" fill="#8fd6e2"/><path d="M4.9 2 Q5.4 3.5 4.6 6" stroke="#1f4650" stroke-width="0.7" fill="none"/><path d="M2.2 2 Q2.5 3.4 2.2 5" stroke="#1f4650" stroke-width="0.5" fill="none"/></svg><div class="a" style="left:55.30px;top:709.17px;font-size:10.1px;line-height:16.19px;white-space:nowrap;color:#cccccc;letter-spacing:0.17px">xmlrpc.php</div><svg class="ic" style="left:39.90px;top:711.69px" width="10.5" height="9" viewBox="0 0 10.5 9"><path d="M0.2 2.8 Q0.2 0.2 2.8 0.2 Q4.6 0.2 5 1.4 Q5.6 1.1 7.2 1.2 Q10.3 1.5 10.3 4.8 V8.2 H8.9 V6.9 H7.6 V8.2 H6.1 V6.6 H5 V8.2 H3.4 V6.2 Q2.4 6 2.2 5.2 V7.6 H0.2 Z" fill="#8fd6e2"/><path d="M4.9 2 Q5.4 3.5 4.6 6" stroke="#1f4650" stroke-width="0.7" fill="none"/><path d="M2.2 2 Q2.5 3.4 2.2 5" stroke="#1f4650" stroke-width="0.5" fill="none"/></svg><svg class="ic" style="left:275.8px;top:27.5px" width="10.5" height="9" viewBox="0 0 10.5 9"><path d="M0.2 2.8 Q0.2 0.2 2.8 0.2 Q4.6 0.2 5 1.4 Q5.6 1.1 7.2 1.2 Q10.3 1.5 10.3 4.8 V8.2 H8.9 V6.9 H7.6 V8.2 H6.1 V6.6 H5 V8.2 H3.4 V6.2 Q2.4 6 2.2 5.2 V7.6 H0.2 Z" fill="#8fd6e2"/><path d="M4.9 2 Q5.4 3.5 4.6 6" stroke="#1f4650" stroke-width="0.7" fill="none"/><path d="M2.2 2 Q2.5 3.4 2.2 5" stroke="#1f4650" stroke-width="0.5" fill="none"/></svg><div class="a" style="left:291.3px;top:25.7px;font-size:10.4px;line-height:14px;color:#ffffff">wp-config.php</div><svg class="a" style="left:362px;top:27.5px" width="9" height="9" viewBox="0 0 9 9"><path d="M1 1 L8 8 M8 1 L1 8" stroke="#c8c8c8" stroke-width="1"/></svg><svg class="ic" style="left:385.5px;top:27.5px" width="10.5" height="9" viewBox="0 0 10.5 9"><path d="M0.2 2.8 Q0.2 0.2 2.8 0.2 Q4.6 0.2 5 1.4 Q5.6 1.1 7.2 1.2 Q10.3 1.5 10.3 4.8 V8.2 H8.9 V6.9 H7.6 V8.2 H6.1 V6.6 H5 V8.2 H3.4 V6.2 Q2.4 6 2.2 5.2 V7.6 H0.2 Z" fill="#8fd6e2"/><path d="M4.9 2 Q5.4 3.5 4.6 6" stroke="#1f4650" stroke-width="0.7" fill="none"/><path d="M2.2 2 Q2.5 3.4 2.2 5" stroke="#1f4650" stroke-width="0.5" fill="none"/></svg><div class="a" style="left:400.8px;top:25.7px;font-size:10.1px;line-height:14px;color:#9a9a9a">functions.php</div><svg class="ic" style="left:491.5px;top:27.5px" width="10.5" height="9" viewBox="0 0 10.5 9"><path d="M0.2 2.8 Q0.2 0.2 2.8 0.2 Q4.6 0.2 5 1.4 Q5.6 1.1 7.2 1.2 Q10.3 1.5 10.3 4.8 V8.2 H8.9 V6.9 H7.6 V8.2 H6.1 V6.6 H5 V8.2 H3.4 V6.2 Q2.4 6 2.2 5.2 V7.6 H0.2 Z" fill="#8fd6e2"/><path d="M4.9 2 Q5.4 3.5 4.6 6" stroke="#1f4650" stroke-width="0.7" fill="none"/><path d="M2.2 2 Q2.5 3.4 2.2 5" stroke="#1f4650" stroke-width="0.5" fill="none"/></svg><div class="a" style="left:507px;top:25.7px;font-size:10.1px;line-height:14px;color:#9a9a9a">test_template.php</div><svg class="ic" style="left:279.9px;top:48.0px" width="10.5" height="9" viewBox="0 0 10.5 9"><path d="M0.2 2.8 Q0.2 0.2 2.8 0.2 Q4.6 0.2 5 1.4 Q5.6 1.1 7.2 1.2 Q10.3 1.5 10.3 4.8 V8.2 H8.9 V6.9 H7.6 V8.2 H6.1 V6.6 H5 V8.2 H3.4 V6.2 Q2.4 6 2.2 5.2 V7.6 H0.2 Z" fill="#8fd6e2"/><path d="M4.9 2 Q5.4 3.5 4.6 6" stroke="#1f4650" stroke-width="0.7" fill="none"/><path d="M2.2 2 Q2.5 3.4 2.2 5" stroke="#1f4650" stroke-width="0.5" fill="none"/></svg><div class="a" style="left:295.8px;top:47.1px;font-size:10.3px;line-height:14px;color:#a9a9a9">wp-config.php</div><div class="ln" style="top:61.70px;color:#6f7073">86</div><div class="code" style="top:61.70px"><span class="f">define</span><span class="b1">(</span><span class="q">'</span><span class="s">AUTH_KEY</span><span class="q">'</span><span class="p">,         </span><span class="q">'</span><span class="s">M3cubcF9ETWzlsR8TePs6OgGuZU4J27TXg1jnNLTYzvvtUU0PWh8+kRAXa0YkzVpcFzUCtwl8q0X2h76DnUPQw==</span><span class="q">'</span><span class="b1">)</span><span class="p">;</span></div><div class="ln" style="top:76.41px;color:#6f7073">87</div><div class="code" style="top:76.41px"><span class="f">define</span><span class="b1">(</span><span class="q">'</span><span class="s">SECURE_AUTH_KEY</span><span class="q">'</span><span class="p">,  </span><span class="q">'</span><span class="s">pFEMoRm2I260y+Gm3bnC7YTnA5rTKG1BvYfUy1heeYbzZ6f4qFKbSw1jYZii6Xfbkjn2w7W6l2vjlrFk5TfDuQ==</span><span class="q">'</span><span class="b1">)</span><span class="p">;</span></div><div class="ln" style="top:91.12px;color:#6f7073">88</div><div class="code" style="top:91.12px"><span class="f">define</span><span class="b1">(</span><span class="q">'</span><span class="s">LOGGED_IN_KEY</span><span class="q">'</span><span class="p">,    </span><span class="q">'</span><span class="s">Oek7++sxE/0m+M+Aa48bpeq1pOaoRit9UC0idUXR1Vm8tvbRFoYZs8JsIxcYccIUk5nfBBHh6iQ2ZHxFbvmPRg==</span><span class="q">'</span><span class="b1">)</span><span class="p">;</span></div><div class="ln" style="top:105.83px;color:#6f7073">89</div><div class="code" style="top:105.83px"><span class="f">define</span><span class="b1">(</span><span class="q">'</span><span class="s">NONCE_KEY</span><span class="q">'</span><span class="p">,        </span><span class="q">'</span><span class="s">rzBAvNnoQb/jVzSNSEFe0ekXJQrf30oxYFMJK8v7QVSQysq/y3IkXzDUooCDFdy70fdxo31TDTd83V2ucF2OKQ==</span><span class="q">'</span><span class="b1">)</span><span class="p">;</span></div><div class="ln" style="top:120.54px;color:#6f7073">90</div><div class="code" style="top:120.54px"><span class="f">define</span><span class="b1">(</span><span class="q">'</span><span class="s">AUTH_SALT</span><span class="q">'</span><span class="p">,        </span><span class="q">'</span><span class="s">9qKYBIeo5ktR2OchqqteI0VlXeeqW8aIol8K2BTifQrs/E59ut3+TOrL/hqjdJKVQtzr0Ihv0AsuHySFLe5clA==</span><span class="q">'</span><span class="b1">)</span><span class="p">;</span></div><div class="ln" style="top:135.25px;color:#6f7073">91</div><div class="code" style="top:135.25px"><span class="f">define</span><span class="b1">(</span><span class="q">'</span><span class="s">SECURE_AUTH_SALT</span><span class="q">'</span><span class="p">, </span><span class="q">'</span><span class="s">aUms10jgMBYgGIv5Bk/co2dCE2sZrk0Erm649JOTQYVe3a9naY9T+R3pQ2VR7bBAOsD+igA7SKp8+JFGEISL+Q==</span><span class="q">'</span><span class="b1">)</span><span class="p">;</span></div><div class="ln" style="top:149.96px;color:#6f7073">92</div><div class="code" style="top:149.96px"><span class="f">define</span><span class="b1">(</span><span class="q">'</span><span class="s">LOGGED_IN_SALT</span><span class="q">'</span><span class="p">,   </span><span class="q">'</span><span class="s">3s4O+Vb1B7NeOQYLOQhyPaykDWfC4x6cPa+Ed3PY/IHn07z8J1dT9t8aaKJeq0HiL22ulPZclQpQwpA+wUkEYg==</span><span class="q">'</span><span class="b1">)</span><span class="p">;</span></div><div class="ln" style="top:164.67px;color:#6f7073">93</div><div class="code" style="top:164.67px"><span class="f">define</span><span class="b1">(</span><span class="q">'</span><span class="s">NONCE_SALT</span><span class="q">'</span><span class="p">,       </span><span class="q">'</span><span class="s">Cgwq1lmq3NYv/12AB6+S99XOSgsNGrpN5aHlZ9FdUhZszG0PbpjH4WNZQvZOd7Nk5qScByYNjv0nRoB/xwCeaA==</span><span class="q">'</span><span class="b1">)</span><span class="p">;</span></div><div class="ln" style="top:179.38px;color:#6f7073">94</div><div class="code" style="top:179.38px"><span class="f">define</span><span class="b1">(</span><span class="p"> </span><span class="q">'</span><span class="s">WP_ENVIRONMENT_TYPE</span><span class="q">'</span><span class="p">, </span><span class="q">'</span><span class="s">local</span><span class="q">'</span><span class="p"> </span><span class="b1">)</span><span class="p">;</span></div><div class="ln" style="top:194.09px;color:#6f7073">95</div><div class="code" style="top:194.09px"><span class="cm">/* That&#x27;s all, stop editing! Happy publishing. */</span></div><div class="ln" style="top:208.80px;color:#6f7073">96</div><div class="code" style="top:208.80px"></div><div class="ln" style="top:223.51px;color:#6f7073">97</div><div class="code" style="top:223.51px"><span class="dc">/** Absolute path to the WordPress directory. */</span></div><div class="ln" style="top:238.22px;color:#6f7073">98</div><div class="code" style="top:238.22px"><span class="k">if</span><span class="p"> </span><span class="b1">(</span><span class="p"> ! </span><span class="f">defined</span><span class="b2">(</span><span class="p"> </span><span class="q">'</span><span class="s">ABSPATH</span><span class="q">'</span><span class="p"> </span><span class="b2">)</span><span class="p"> </span><span class="b1">)</span><span class="p"> </span><span class="b1">{</span></div><div class="ln" style="top:252.93px;color:#6f7073">99</div><div class="code" style="top:252.93px"><span class="p">  </span><span class="f">define</span><span class="b2">(</span><span class="p"> </span><span class="q">'</span><span class="s">ABSPATH</span><span class="q">'</span><span class="p">, </span><span class="c">__DIR__</span><span class="p"> . </span><span class="q">'</span><span class="s">/</span><span class="q">'</span><span class="p"> </span><span class="b2">)</span><span class="p">;</span></div><div class="ln" style="top:267.64px;color:#6f7073">100</div><div class="code" style="top:267.64px"><span class="b1">}</span></div><div class="ln" style="top:282.35px;color:#d0d0d0">101</div><div class="code" style="top:282.35px"></div><div class="ln" style="top:297.06px;color:#6f7073">102</div><div class="code" style="top:297.06px"><span class="dc">/** Sets up WordPress vars and included files. */</span></div><div class="ln" style="top:311.77px;color:#6f7073">103</div><div class="code" style="top:311.77px"><span class="k">require_once</span><span class="p"> </span><span class="c">ABSPATH</span><span class="p"> . </span><span class="q">'</span><span class="s">wp-settings.php</span><span class="q">'</span><span class="p">;</span></div><div class="ln" style="top:326.48px;color:#6f7073">104</div><div class="code" style="top:326.48px"></div><div class="ln" style="top:341.19px;color:#6f7073">105</div><div class="code" style="top:341.19px"><span class="k">if</span><span class="p"> </span><span class="b1">(</span><span class="p"> ! </span><span class="f">defined</span><span class="b2">(</span><span class="p"> </span><span class="q">'</span><span class="s">WP_DISABLE_FATAL_ERROR_HANDLER</span><span class="q">'</span><span class="p"> </span><span class="b2">)</span><span class="p"> </span><span class="b1">)</span><span class="p"> </span><span class="b1">{</span></div><div class="ln" style="top:355.90px;color:#6f7073">106</div><div class="code" style="top:355.90px"><span class="p">  </span><span class="f">define</span><span class="b2">(</span><span class="p"> </span><span class="q">'</span><span class="s">WP_DISABLE_FATAL_ERROR_HANDLER</span><span class="q">'</span><span class="p">, </span><span class="c">true</span><span class="p"> </span><span class="b2">)</span><span class="p">;</span></div><div class="ln" style="top:370.61px;color:#6f7073">107</div><div class="code" style="top:370.61px"><span class="b1">}</span></div><div class="ln" style="top:385.32px;color:#6f7073">108</div><div class="code" style="top:385.32px"><span class="k">if</span><span class="p"> </span><span class="b1">(</span><span class="p"> ! </span><span class="f">defined</span><span class="b2">(</span><span class="p"> </span><span class="q">'</span><span class="s">WP_DEBUG</span><span class="q">'</span><span class="p"> </span><span class="b2">)</span><span class="p"> </span><span class="b1">)</span><span class="p"> </span><span class="b1">{</span></div><div class="ln" style="top:400.03px;color:#6f7073">109</div><div class="code" style="top:400.03px"><span class="p">  </span><span class="f">define</span><span class="b2">(</span><span class="p"> </span><span class="q">'</span><span class="s">WP_DEBUG</span><span class="q">'</span><span class="p">, </span><span class="c">true</span><span class="p"> </span><span class="b2">)</span><span class="p">;</span></div><div class="ln" style="top:414.74px;color:#6f7073">110</div><div class="code" style="top:414.74px"><span class="b1">}</span></div><div class="ln" style="top:429.45px;color:#6f7073">111</div><div class="code" style="top:429.45px"><span class="k">if</span><span class="p"> </span><span class="b1">(</span><span class="p"> ! </span><span class="f">defined</span><span class="b2">(</span><span class="p"> </span><span class="q">'</span><span class="s">WP_DEBUG_LOG</span><span class="q">'</span><span class="p"> </span><span class="b2">)</span><span class="p"> </span><span class="b1">)</span><span class="p"> </span><span class="b1">{</span></div><div class="ln" style="top:444.16px;color:#6f7073">112</div><div class="code" style="top:444.16px"><span class="p">  </span><span class="f">define</span><span class="b2">(</span><span class="p"> </span><span class="q">'</span><span class="s">WP_DEBUG_LOG</span><span class="q">'</span><span class="p">, </span><span class="c">true</span><span class="p"> </span><span class="b2">)</span><span class="p">;</span></div><div class="ln" style="top:458.87px;color:#6f7073">113</div><div class="code" style="top:458.87px"><span class="b1">}</span></div><div class="ln" style="top:473.58px;color:#6f7073">114</div><div class="code" style="top:473.58px"><span class="k">if</span><span class="p"> </span><span class="b1">(</span><span class="p"> ! </span><span class="f">defined</span><span class="b2">(</span><span class="p"> </span><span class="q">'</span><span class="s">WP_DEBUG_DISPLAY</span><span class="q">'</span><span class="p"> </span><span class="b2">)</span><span class="p"> </span><span class="b1">)</span><span class="p"> </span><span class="b1">{</span></div><div class="ln" style="top:488.29px;color:#6f7073">115</div><div class="code" style="top:488.29px"><span class="p">  </span><span class="f">define</span><span class="b2">(</span><span class="p"> </span><span class="q">'</span><span class="s">WP_DEBUG_DISPLAY</span><span class="q">'</span><span class="p">, </span><span class="c">false</span><span class="p"> </span><span class="b2">)</span><span class="p">;</span></div><div class="ln" style="top:503.00px;color:#6f7073">116</div><div class="code" style="top:503.00px"><span class="b1">}</span></div><div class="a" style="left:319.20px;top:252.93px;width:1px;height:14.71px;background:#3a3a3a"></div><div class="a" style="left:319.20px;top:355.90px;width:1px;height:14.71px;background:#3a3a3a"></div><div class="a" style="left:319.20px;top:400.03px;width:1px;height:14.71px;background:#3a3a3a"></div><div class="a" style="left:319.20px;top:444.16px;width:1px;height:14.71px;background:#3a3a3a"></div><div class="a" style="left:319.20px;top:488.29px;width:1px;height:14.71px;background:#3a3a3a"></div>
</body></html>
